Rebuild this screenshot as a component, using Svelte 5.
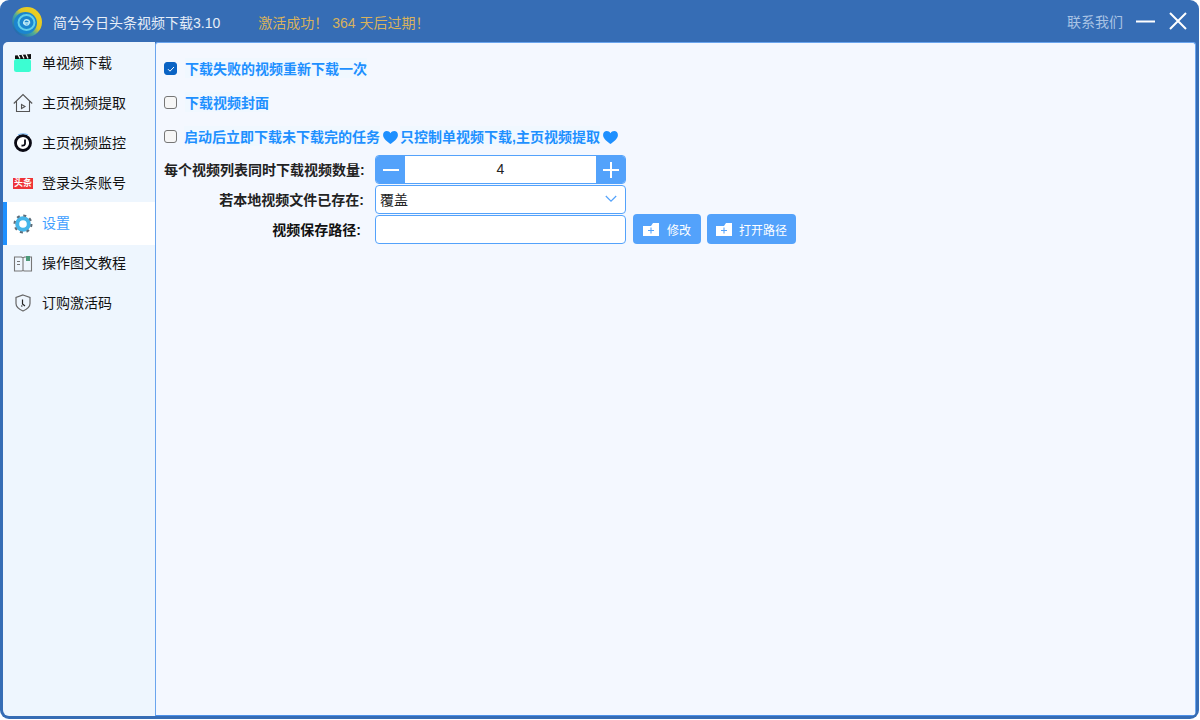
<script>
  const menu = [
    { id: 'clip', label: '单视频下载' },
    { id: 'home', label: '主页视频提取' },
    { id: 'clock', label: '主页视频监控' },
    { id: 'toutiao', label: '登录头条账号' },
    { id: 'gear', label: '设置', active: true },
    { id: 'book', label: '操作图文教程' },
    { id: 'shield', label: '订购激活码' }
  ]
  let count = $state(4)
</script>

{#snippet heart()}
  <svg class="heart" viewBox="0 0 16 14" width="15" height="13"><path d="M8 14C5 11.6 0 8.6 0 4.2 0 1.8 1.8 0 4 0c1.700 0 3.200.9 4 2.300C8.800.9 10.300 0 12 0c2.200 0 4 1.800 4 4.200 0 4.400-5 7.400-8 9.800z" fill="#1e90ff"/></svg>
{/snippet}

{#snippet folder()}
  <svg viewBox="0 0 16 13" width="16" height="13"><path d="M0 3h8l2-3h6v13H0z" fill="#fff"/><path d="M8 4.500v6M5 7.500h6" stroke="#53a2fb" stroke-width="1.100" fill="none"/></svg>
{/snippet}

<div class="window">
  <header class="titlebar">
    <svg class="logo" viewBox="0 0 30 30" width="30" height="30">
      <defs>
        <linearGradient id="rim" x1="0.9" y1="0.1" x2="0.1" y2="0.9">
          <stop offset="0" stop-color="#f0d01e"/>
          <stop offset="0.4" stop-color="#e0c828"/>
          <stop offset="0.6" stop-color="#49aa9c"/>
          <stop offset="1" stop-color="#1c5fb4"/>
        </linearGradient>
      </defs>
      <circle cx="15" cy="15" r="15" fill="url(#rim)"/>
      <ellipse cx="13.500" cy="16" rx="11.500" ry="11" fill="#1b86cf"/>
      <ellipse cx="14.500" cy="15.500" rx="8" ry="7.500" fill="none" stroke="#63d0ea" stroke-width="2"/>
      <path d="M11 16h6.500c.5-3-4-4.500-5.500-1.500-1.200 2.800 2.500 5 5 2.500" fill="none" stroke="#bfeaf6" stroke-width="1.400"/>
    </svg>
    <span class="title">简兮今日头条视频下载3.10</span>
    <span class="notice">激活成功！ 364 天后过期！</span>
    <span class="contact">联系我们</span>
    <svg class="winbtn" viewBox="0 0 20 20" width="20" height="20"><path d="M0 10.500h19" stroke="#fff" stroke-width="2"/></svg>
    <svg class="winbtn close" viewBox="0 0 20 20" width="20" height="20"><path d="M2 2l16 16M18 2L2 18" stroke="#fff" stroke-width="2"/></svg>
  </header>

  <div class="body">
    <nav class="sidebar">
      {#each menu as item}
        <div class="item" class:active={item.active}>
          <span class="icon">
            {#if item.id === 'clip'}
              <svg viewBox="0 0 20 20" width="20" height="20"><rect x="1" y="6" width="17" height="13" rx="2.500" fill="#3cfdd2"/><path d="M2 2.500l16-1.500v5H2z" fill="#111"/><path d="M5 1.500l2 4M9 1.500l2 4M13 1l2 4.500" stroke="#fff" stroke-width="1.300"/></svg>
            {:else if item.id === 'home'}
              <svg viewBox="0 0 20 20" width="20" height="20" fill="none" stroke="#555" stroke-width="1.100"><path d="M.8 10.500L10 1.500l9.200 9M3.500 8.500V18.500h13V8.500"/><path d="M8.500 11.500l3.500 2-3.500 2z"/></svg>
            {:else if item.id === 'clock'}
              <svg viewBox="0 0 20 20" width="20" height="20"><circle cx="10" cy="10" r="7.500" fill="#fff" stroke="#0a0a14" stroke-width="2.800"/><path d="M12 6.500v4.500q-.5 2-3.500 1.500" fill="none" stroke="#0a0a14" stroke-width="1.800"/><path d="M5 2q5-2.500 10 0" fill="none" stroke="#7db6ee" stroke-width="1.200"/></svg>
            {:else if item.id === 'toutiao'}
              <span class="tt">头条</span>
            {:else if item.id === 'gear'}
              <svg viewBox="0 0 20 20" width="20" height="20"><circle cx="10" cy="10" r="5.800" fill="none" stroke="#45b6ea" stroke-width="4"/><circle cx="10" cy="10" r="8.500" fill="none" stroke="#5a6b78" stroke-width="2" stroke-dasharray="3 3.680"/></svg>
            {:else if item.id === 'book'}
              <svg viewBox="0 0 20 20" width="20" height="20" fill="none" stroke="#777" stroke-width="1.100"><path d="M1.500 4h7l1.500 1 1.500-1h7v14h-7l-1.500-.5-1.500.5h-7zM10 5v12M4 8.500h3M4 11.500h3"/><path d="M13 3h4v5h-4z" fill="#4d9a7a" stroke="none"/></svg>
            {:else}
              <svg viewBox="0 0 20 20" width="20" height="20" fill="none" stroke="#666" stroke-width="1.200"><path d="M10 2l7 2.500v6c0 3.500-3.500 6-7 7.500-3.500-1.500-7-4-7-7.500v-6z"/><path d="M9.500 6.500v4.500l2.500 2M8 13h1.500" stroke="#222"/></svg>
            {/if}
          </span>
          <span class="label">{item.label}</span>
        </div>
      {/each}
    </nav>

    <main class="content">
      <label class="check first">
        <span class="box on"><svg viewBox="0 0 12 12" width="12" height="12"><path d="M3 6.200l2 2L9 4" stroke="#fff" stroke-width="1" fill="none"/></svg></span>
        <span class="check-text">下载失败的视频重新下载一次</span>
      </label>
      <label class="check">
        <span class="box"></span>
        <span class="check-text">下载视频封面</span>
      </label>
      <label class="check third">
        <span class="box"></span>
        <span class="check-text">启动后立即下载未下载完的任务</span>
        {@render heart()}
        <span class="check-text">只控制单视频下载,主页视频提取</span>
        {@render heart()}
      </label>

      <div class="form">
        <span class="field-label">每个视频列表同时下载视频数量:</span>
        <div class="stepper">
          <button class="step" onclick={() => count--}><svg viewBox="0 0 16 16" width="16" height="16"><path d="M0 8h16" stroke="#fff" stroke-width="2"/></svg></button>
          <span class="step-value">{count}</span>
          <button class="step" onclick={() => count++}><svg viewBox="0 0 16 16" width="16" height="16"><path d="M0 8h16M8 0v16" stroke="#fff" stroke-width="2"/></svg></button>
        </div>

        <span class="field-label">若本地视频文件已存在:</span>
        <div class="select">
          <span>覆盖</span>
          <svg viewBox="0 0 12 8" width="12" height="8"><path d="M.8 1l5.200 5.200L11.200 1" stroke="#53a2fb" stroke-width="1.200" fill="none"/></svg>
        </div>

        <span class="field-label path-label">视频保存路径:</span>
        <div class="path-row">
          <div class="path-input"></div>
          <button class="action first-action">{@render folder()}<span>修改</span></button>
          <button class="action">{@render folder()}<span>打开路径</span></button>
        </div>
      </div>
    </main>
  </div>
</div>

<style>
  :global(body) {
    margin: 0;
    background: #fff;
  }
  .window {
    width: 1199px;
    height: 719px;
    box-sizing: border-box;
    background: #366db5;
    border-radius: 9px;
    padding: 0 3px 3px;
    display: flex;
    flex-direction: column;
    font-family: "Liberation Sans", "Noto Sans CJK SC", sans-serif;
    overflow: hidden;
  }
  .titlebar {
    height: 42px;
    flex: none;
    display: flex;
    align-items: center;
    color: #fff;
    font-size: 14px;
  }
  .logo {
    margin-left: 9px;
    margin-top: 2px;
  }
  .title {
    margin-left: 11px;
    margin-top: 1px;
    color: #e6eef8;
  }
  .notice {
    margin-left: 38px;
    margin-top: 1px;
    color: #d9b25c;
  }
  .contact {
    margin-left: auto;
    margin-right: 13px;
    font-size: 14px;
    color: #a9c3e4;
  }
  .close {
    margin-left: 12px;
    margin-right: 8px;
  }
  .body {
    flex: 1;
    min-height: 0;
    display: flex;
    border-radius: 5px 0 5px 6px;
    overflow: hidden;
  }
  .sidebar {
    width: 152px;
    flex: none;
    background: #eef6fe;
    padding-top: 1px;
    box-sizing: border-box;
  }
  .item {
    height: 40px;
    display: flex;
    align-items: center;
    font-size: 14px;
    color: #111;
    padding-left: 10px;
  }
  .item.active {
    background: #fff;
    color: #409eff;
    height: 43px;
    margin: -1px 0 -2px;
    border-left: 4px solid #1e90ff;
    padding-left: 6px;
  }
  .icon {
    width: 20px;
    height: 20px;
    margin-right: 9px;
    display: flex;
    align-items: center;
    justify-content: center;
  }
  .label {
    padding-bottom: 2px;
  }
  .active .label {
    padding-bottom: 3px;
  }
  .tt {
    width: 20px;
    height: 11px;
    background: #ee3338;
    color: #fff;
    font-size: 9px;
    line-height: 11px;
    font-weight: bold;
    text-align: center;
    white-space: nowrap;
  }
  .content {
    flex: 1;
    background: #f4f8ff;
    border: 1px solid #6aa5ee;
    border-bottom-color: #4d90e8;
    border-radius: 3px 3px 0 0;
    padding: 0 0 0 8px;
    box-sizing: border-box;
  }
  .check {
    display: flex;
    align-items: center;
    height: 18px;
    margin-top: 16px;
    font-size: 14px;
    font-weight: bold;
    color: #1e90ff;
    white-space: nowrap;
  }
  .box {
    width: 11px;
    height: 11px;
    border: 1px solid #767676;
    border-radius: 3px;
    background: #f6f6f6;
    margin-right: 8px;
    flex: none;
  }
  .third .box {
    margin-right: 7px;
  }
  .box.on {
    background: #0a63c4;
    border-color: #0a63c4;
  }
  .box.on svg {
    display: block;
  }
  .check-text {
    background: #f0f8ff;
    padding-top: 2px;
    line-height: 18px;
  }
  .heart {
    margin: 2px 2px 0 3px;
  }
  .form {
    display: grid;
    grid-template-columns: 200px auto;
    column-gap: 11px;
    row-gap: 1px;
    align-items: center;
    justify-content: start;
    margin-top: 10px;
  }
  .field-label {
    text-align: right;
    font-size: 14px;
    font-weight: bold;
    color: #222;
    white-space: nowrap;
    padding-bottom: 2px;
  }
  .path-label {
    padding-right: 3px;
    color: #111;
  }
  .stepper {
    width: 251px;
    height: 29px;
    box-sizing: border-box;
    display: flex;
    border: 1px solid #53a2fb;
    border-radius: 4px;
    background: #fff;
    overflow: hidden;
  }
  .step {
    width: 29px;
    flex: none;
    border: 0;
    padding: 0;
    background: #53a2fb;
    display: flex;
    align-items: center;
    justify-content: center;
  }
  .step-value {
    flex: 1;
    text-align: center;
    font-size: 14px;
    line-height: 27px;
    color: #222;
  }
  .select {
    width: 251px;
    height: 29px;
    box-sizing: border-box;
    border: 1px solid #53a2fb;
    border-radius: 4px;
    background: #fff;
    display: flex;
    align-items: center;
    justify-content: space-between;
    padding: 0 8px 2px 4px;
    font-size: 14px;
    color: #222;
  }
  .path-row {
    display: flex;
    align-items: flex-end;
    height: 29px;
    white-space: nowrap;
  }
  .path-input {
    width: 251px;
    height: 29px;
    box-sizing: border-box;
    border: 1px solid #53a2fb;
    border-radius: 4px;
    background: #fff;
    margin-right: 7px;
  }
  .action {
    height: 30px;
    border: 0;
    border-radius: 4px;
    background: #53a2fb;
    color: #fff;
    font-family: inherit;
    font-size: 12px;
    display: flex;
    align-items: center;
    padding: 0 9px 0 9px;
    gap: 7px;
    margin-right: 6px;
  }
  .first-action {
    padding: 0 10px;
    gap: 8px;
  }
</style>
